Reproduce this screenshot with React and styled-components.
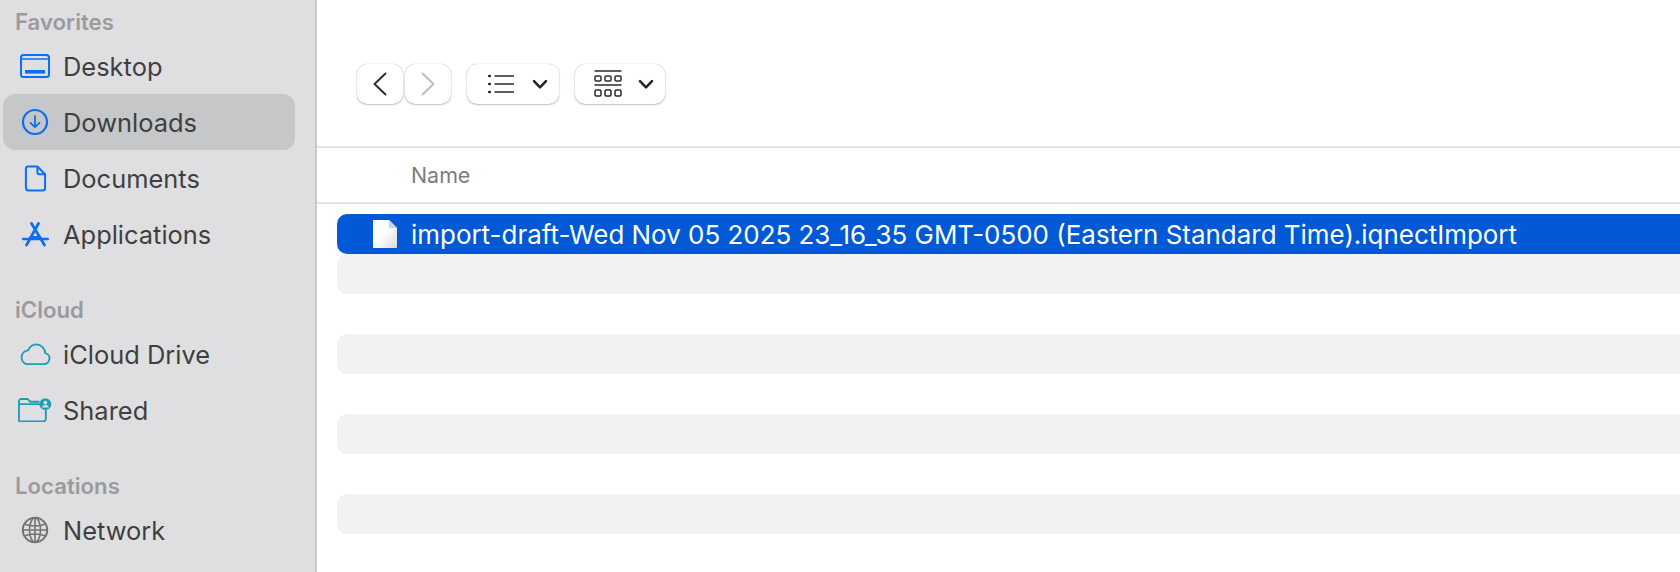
import React from "react";
import styled, { createGlobalStyle } from "styled-components";

const Global = createGlobalStyle`
  html, body { margin: 0; padding: 0; background: #fff; overflow: hidden; }
  body { font-family: Inter, "Liberation Sans", sans-serif; }
`;

const Window = styled.div`
  display: flex;
  width: 1680px;
  height: 572px;
  overflow: hidden;
`;

const Sidebar = styled.aside`
  width: 317px;
  flex-shrink: 0;
  box-sizing: border-box;
  padding: 10px 0 0 3px;
  background: #dfdfe2;
  border-right: 2px solid #c9c9cb;
  display: flex;
  flex-direction: column;
  gap: 36px;
`;

const Section = styled.div`
  display: flex;
  flex-direction: column;
`;

const SectionLabel = styled.div`
  height: 24px;
  line-height: 24px;
  margin: 0 0 4px 12px;
  font-size: 22.2px;
  font-weight: 600;
  color: #9b9b9d;
`;

const Row = styled.div`
  display: flex;
  align-items: center;
  width: 292px;
  height: 56px;
  border-radius: 12px;
  background: ${(p) => (p.$active ? "#c6c7c9" : "transparent")};
`;

const RowIcon = styled.span`
  width: 60px;
  flex-shrink: 0;
  display: flex;
  justify-content: center;
  padding-left: 4px;
  box-sizing: border-box;
`;

const RowText = styled.span`
  font-size: 25.45px;
  color: #3f3f41;
`;

const Main = styled.main`
  flex: 1;
  min-width: 0;
  display: flex;
  flex-direction: column;
`;

const Toolbar = styled.div`
  height: 146px;
  box-sizing: border-box;
  padding: 64px 0 0 40px;
  display: flex;
  align-items: flex-start;
`;

const ToolButton = styled.div`
  width: ${(p) => p.$w}px;
  height: 40px;
  box-sizing: border-box;
  margin-right: ${(p) => p.$after}px;
  padding-left: ${(p) => p.$pad || 0}px;
  gap: ${(p) => p.$inner || 0}px;
  border-radius: 10px;
  background: #fff;
  box-shadow: 0 0 1px rgba(0, 0, 0, 0.35), 0 1px 2px rgba(0, 0, 0, 0.22);
  display: flex;
  align-items: center;
  justify-content: ${(p) => (p.$pad ? "flex-start" : "center")};
`;

const ColumnHead = styled.div`
  height: 58px;
  box-sizing: border-box;
  border-top: 2px solid #e3e3e3;
  border-bottom: 2px solid #e3e3e3;
  padding-left: 94px;
  display: flex;
  align-items: center;
  font-size: 21.4px;
  color: #7d7d7d;
`;

const FileList = styled.div`
  padding: 10px 0 0 20px;
  display: flex;
  flex-direction: column;
`;

const FileRow = styled.div`
  height: 40px;
  display: flex;
  align-items: center;
  border-radius: 10px 0 0 10px;
  background: ${(p) => (p.$selected ? "#0159d6" : p.$striped ? "#f1f3f3" : "transparent")};
`;

const FileIcon = styled.span`
  width: 74px;
  flex-shrink: 0;
  display: flex;
  justify-content: center;
  padding-left: 22px;
  box-sizing: border-box;
`;

const FileName = styled.span`
  font-size: 25.95px;
  color: #fff;
  white-space: nowrap;
`;

const BLUE = "#0b6ff0";
const TEAL = "#1f9db8";

const DesktopIcon = () => (
  <svg width="30" height="24" viewBox="0 0 30 24" fill="none">
    <rect x="1" y="1" width="28" height="22" rx="2.5" stroke={BLUE} strokeWidth="2" />
    <path d="M1 5h28" stroke={BLUE} strokeWidth="1.5" />
    <rect x="5" y="16" width="20" height="3.6" fill={BLUE} />
  </svg>
);

const DownloadIcon = () => (
  <svg width="28" height="28" viewBox="0 0 28 28" fill="none" stroke={BLUE}>
    <circle cx="14" cy="14" r="12" strokeWidth="2.2" />
    <path d="M14 8v11M9.5 14.8 14 19.2l4.5-4.4" strokeWidth="1.8" strokeLinecap="round" strokeLinejoin="round" />
  </svg>
);

const DocIcon = () => (
  <svg width="23" height="27" viewBox="0 0 24 28" fill="none" stroke={BLUE} strokeWidth="2.1" strokeLinejoin="round">
    <path d="M4 1.5h10l8 8V24a2.5 2.5 0 0 1-2.5 2.5h-15A2.5 2.5 0 0 1 2 24V3.5a2 2 0 0 1 2-2Z" />
    <path d="M14 1.5v6a2 2 0 0 0 2 2h6" />
  </svg>
);

const AppsIcon = () => (
  <svg width="27" height="25" viewBox="0 0 27 25" fill="none" stroke={BLUE} strokeLinecap="round">
    <path d="M9.5 1.5 22.5 23M16.5 1.5 4.5 23" strokeWidth="2.7" />
    <path d="M1.2 17h24.6" strokeWidth="2.4" />
    <path d="M8.5 15.4h9.5" strokeWidth="3" />
  </svg>
);

const CloudIcon = () => (
  <svg width="32" height="22.6" viewBox="0 0 34 24" fill="none" stroke={TEAL} strokeWidth="2" strokeLinejoin="round">
    <path d="M8 22.5h18.5a6 6 0 0 0 1.4-11.8A10 10 0 0 0 18.5 1.5a9.5 9.5 0 0 0-8.6 6.2A7.6 7.6 0 0 0 8 22.5Z" />
  </svg>
);

const SharedIcon = () => (
  <svg width="34" height="24.5" viewBox="0 0 36 26" fill="none">
    <path d="M23 6.5H2M2 25h24.5a3 3 0 0 0 3-3V13M2 25a1.5 1.5 0 0 1-1-1.5V3.5A2.5 2.5 0 0 1 3.5 1H10l3 3h9" stroke={TEAL} strokeWidth="2" strokeLinecap="round" strokeLinejoin="round" />
    <circle cx="29" cy="6.5" r="6.3" fill={TEAL} />
    <circle cx="29" cy="4.8" r="2" fill="#dfdfe2" />
    <path d="M25.2 10.2c.6-2 2.2-2.8 3.8-2.8s3.2.8 3.8 2.8Z" fill="#dfdfe2" />
  </svg>
);

const GlobeIcon = () => (
  <svg width="28" height="28" viewBox="0 0 28 28" fill="none" stroke="#737375" strokeWidth="1.6">
    <circle cx="14" cy="14" r="12.2" strokeWidth="2" />
    <ellipse cx="14" cy="14" rx="5.5" ry="12.2" />
    <path d="M14 2v24M3.4 8c6 2.6 15.2 2.6 21.2 0M3.4 20c6-2.6 15.2-2.6 21.2 0M2 14h24" />
  </svg>
);

const Back = () => (
  <svg width="14" height="24" viewBox="0 0 14 24" fill="none" stroke="#2b2b2b" strokeWidth="1.9" strokeLinecap="round" strokeLinejoin="round">
    <path d="M12.5 1.5 1.5 12l11 10.5" />
  </svg>
);

const Forward = () => (
  <svg width="14" height="24" viewBox="0 0 14 24" fill="none" stroke="#bdbdbd" strokeWidth="1.9" strokeLinecap="round" strokeLinejoin="round">
    <path d="M1.5 1.5 12.5 12l-11 10.5" />
  </svg>
);

const Chevron = () => (
  <svg width="16" height="11" viewBox="0 0 16 11" fill="none" stroke="#262626" strokeWidth="2.6" strokeLinecap="round" strokeLinejoin="round">
    <path d="M2 2.2 8 8.4l6-6.2" />
  </svg>
);

const ListIcon = () => (
  <svg width="26" height="20" viewBox="0 0 26 20" fill="none" stroke="#2b2b2b">
    <path d="M6.5 2h19.5M6.5 10h19.5M6.5 18h19.5" strokeWidth="1.5" />
    <path d="M1.2 2h.6M1.2 10h.6M1.2 18h.6" strokeWidth="2.6" strokeLinecap="round" />
  </svg>
);

const GalleryIcon = () => (
  <svg width="28" height="28" viewBox="0 0 28 28" fill="none" stroke="#2b2b2b" strokeWidth="1.5">
    <path d="M0.5 1h27M0.5 15h27" />
    <rect x="1" y="6" width="6" height="5" rx="1.2" />
    <rect x="11" y="6" width="6" height="5" rx="1.2" />
    <rect x="21" y="6" width="6" height="5" rx="1.2" />
    <rect x="1" y="20" width="6" height="6" rx="1.2" />
    <rect x="11" y="20" width="6" height="6" rx="1.2" />
    <rect x="21" y="20" width="6" height="6" rx="1.2" />
  </svg>
);

const BlankFile = () => (
  <svg width="24" height="28" viewBox="0 0 24 28">
    <defs>
      <linearGradient id="sheet" x1="0" y1="0" x2="1" y2="1">
        <stop offset="0.45" stopColor="#ffffff" />
        <stop offset="1" stopColor="#dcdcdc" />
      </linearGradient>
    </defs>
    <path d="M1 0h15l8 8v19a1 1 0 0 1-1 1H1a1 1 0 0 1-1-1V1a1 1 0 0 1 1-1Z" fill="url(#sheet)" />
    <path d="M16 0l8 8h-7a1 1 0 0 1-1-1Z" fill="#c9d3e2" />
  </svg>
);

const groups = [
  {
    label: "Favorites",
    rows: [
      { name: "Desktop", icon: <DesktopIcon /> },
      { name: "Downloads", icon: <DownloadIcon />, active: true },
      { name: "Documents", icon: <DocIcon /> },
      { name: "Applications", icon: <AppsIcon /> },
    ],
  },
  {
    label: "iCloud",
    rows: [
      { name: "iCloud Drive", icon: <CloudIcon /> },
      { name: "Shared", icon: <SharedIcon /> },
    ],
  },
  {
    label: "Locations",
    rows: [{ name: "Network", icon: <GlobeIcon /> }],
  },
];

const App = () => (
  <Window>
    <Global />
    <Sidebar>
      {groups.map((g) => (
        <Section key={g.label}>
          <SectionLabel>{g.label}</SectionLabel>
          {g.rows.map((r) => (
            <Row key={r.name} $active={r.active}>
              <RowIcon>{r.icon}</RowIcon>
              <RowText>{r.name}</RowText>
            </Row>
          ))}
        </Section>
      ))}
    </Sidebar>
    <Main>
      <Toolbar>
        <ToolButton $w={46} $after={2}><Back /></ToolButton>
        <ToolButton $w={46} $after={16}><Forward /></ToolButton>
        <ToolButton $w={92} $after={16} $pad={21} $inner={18}>
          <ListIcon />
          <Chevron />
        </ToolButton>
        <ToolButton $w={90} $after={0} $pad={19} $inner={16}>
          <GalleryIcon />
          <Chevron />
        </ToolButton>
      </Toolbar>
      <ColumnHead>Name</ColumnHead>
      <FileList>
        <FileRow $selected>
          <FileIcon><BlankFile /></FileIcon>
          <FileName>import-draft-Wed Nov 05 2025 23_16_35 GMT-0500 (Eastern Standard Time).iqnectImport</FileName>
        </FileRow>
        {[true, false, true, false, true, false, true].map((s, i) => (
          <FileRow key={i} $striped={s} />
        ))}
      </FileList>
    </Main>
  </Window>
);

export default App;
